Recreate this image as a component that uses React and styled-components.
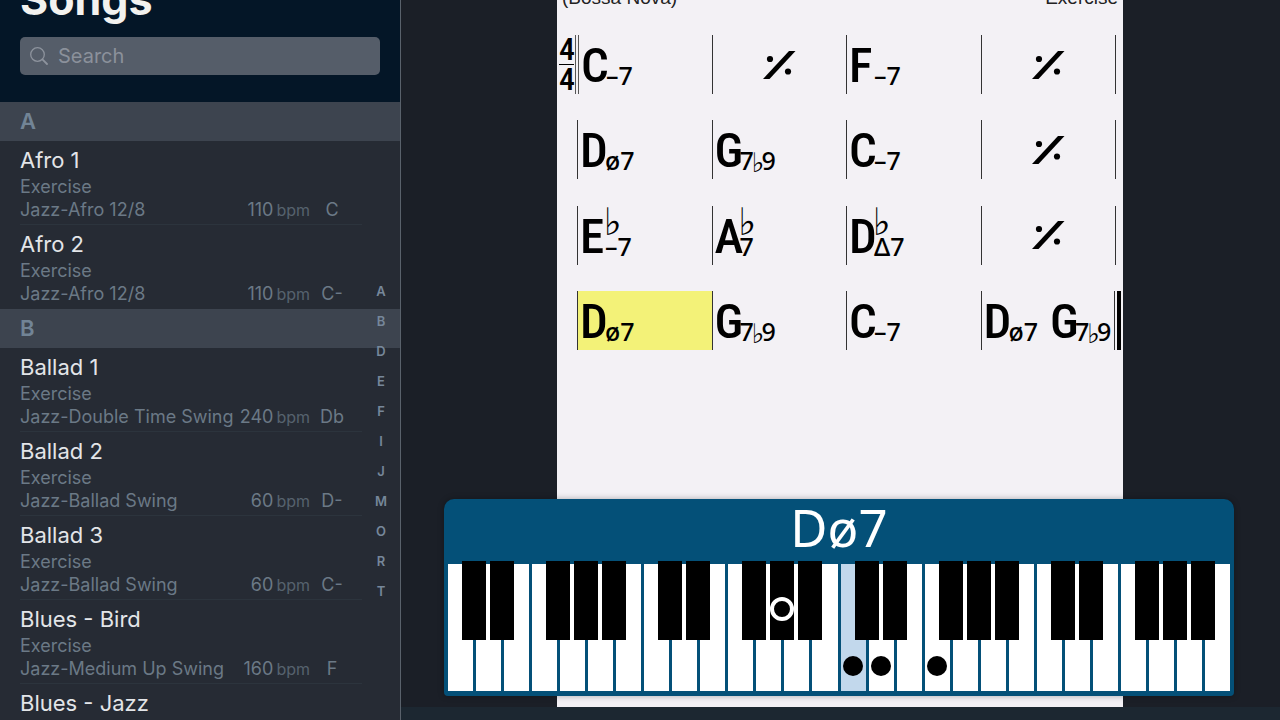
import React from 'react'
import styled, { createGlobalStyle } from 'styled-components'

const sections = [
  {
    letter: 'A',
    songs: [
      { title: 'Afro 1', style: 'Jazz-Afro 12/8', tempo: 110, songKey: 'C' },
      { title: 'Afro 2', style: 'Jazz-Afro 12/8', tempo: 110, songKey: 'C-' },
    ],
  },
  {
    letter: 'B',
    songs: [
      { title: 'Ballad 1', style: 'Jazz-Double Time Swing', tempo: 240, songKey: 'Db' },
      { title: 'Ballad 2', style: 'Jazz-Ballad Swing', tempo: 60, songKey: 'D-' },
      { title: 'Ballad 3', style: 'Jazz-Ballad Swing', tempo: 60, songKey: 'C-' },
      { title: 'Blues - Bird', style: 'Jazz-Medium Up Swing', tempo: 160, songKey: 'F' },
      { title: 'Blues - Jazz', style: 'Jazz-Medium Swing', tempo: 120, songKey: 'F' },
    ],
  },
]

const letters = ['A', 'B', 'D', 'E', 'F', 'I', 'J', 'M', 'O', 'R', 'T']

// a measure is a list of chords, 'repeat' stands for the one bar repeat sign
const staves = [
  [[{ root: 'C', quality: '–7' }], 'repeat', [{ root: 'F', quality: '–7' }], 'repeat'],
  [[{ root: 'D', quality: 'ø7' }], [{ root: 'G', quality: '7♭9' }], [{ root: 'C', quality: '–7' }], 'repeat'],
  [
    [{ root: 'E', flat: true, quality: '–7' }],
    [{ root: 'A', flat: true, quality: '7' }],
    [{ root: 'D', flat: true, quality: 'Δ7' }],
    'repeat',
  ],
  [
    [{ root: 'D', quality: 'ø7' }],
    [{ root: 'G', quality: '7♭9' }],
    [{ root: 'C', quality: '–7' }],
    [{ root: 'D', quality: 'ø7' }, { root: 'G', quality: '7♭9' }],
  ],
]

const noteNames = ['C', 'D', 'E', 'F', 'G', 'A', 'B']
const whiteKeys = Array.from({ length: 28 }, (_, i) => ({
  note: noteNames[i % 7],
  octave: Math.floor(i / 7) + 2,
  sharp: ![2, 6].includes(i % 7),
}))
const rootKey = 14
const playedKeys = [14, 15, 17]
const bassKey = 11

const Song = ({ title, style, tempo, songKey }) => (
  <SongItem>
    <SongButton type="button">
      <SongTitle>{title}</SongTitle>
      <div>Exercise</div>
      <Meta>
        <StyleName>{style}</StyleName>
        <Tempo>{tempo}</Tempo>
        <Bpm>bpm</Bpm>
        <SongKey>{songKey}</SongKey>
      </Meta>
    </SongButton>
  </SongItem>
)

const Chord = ({ root, flat, quality }) => (
  <ChordBox>
    <Root>{root}</Root>
    {flat && <Accidental>♭</Accidental>}
    <Quality>
      {quality.split('').map((char, i) => (char === '♭' ? <SmallFlat key={i}>♭</SmallFlat> : char))}
    </Quality>
  </ChordBox>
)

const RepeatSign = () => (
  <svg width="33" height="28" viewBox="0 0 33 28" role="img" aria-label="Repeat bar">
    <path d="M0 28 L26 0 H32.5 L6.5 28 Z" />
    <circle cx="7" cy="8" r="3.1" />
    <circle cx="25" cy="20.5" r="3.1" />
  </svg>
)

const Measure = ({ content, active, first }) => (
  <MeasureBox $active={active} $first={first} $center={content === 'repeat'}>
    {content === 'repeat' ? <RepeatSign /> : content.map((chord, i) => <Chord key={i} {...chord} />)}
  </MeasureBox>
)

const SongList = () => (
  <Sidebar>
    <Header>
      <Heading>Songs</Heading>
      <SearchBox>
        <svg width="18" height="18" viewBox="0 0 18 18" fill="none" stroke="#8d939d" aria-hidden="true">
          <circle cx="7.5" cy="7.5" r="6.8" strokeWidth="1.3" />
          <path d="M12.4 12.4 L17 17" strokeWidth="1.8" strokeLinecap="round" />
        </svg>
        <SearchInput type="search" placeholder="Search" aria-label="Search" />
      </SearchBox>
    </Header>
    {sections.map((section) => (
      <section key={section.letter} id={section.letter}>
        <SectionTitle>{section.letter}</SectionTitle>
        <List>
          {section.songs.map((song) => (
            <Song key={song.title} {...song} />
          ))}
        </List>
      </section>
    ))}
    <LetterIndex aria-label="Index">
      {letters.map((letter) => (
        <a key={letter} href={`#${letter}`}>
          {letter}
        </a>
      ))}
    </LetterIndex>
  </Sidebar>
)

const Keyboard = () => (
  <KeyboardPanel>
    <ChordName>Dø7</ChordName>
    <Keys>
      {whiteKeys.map(({ note, octave, sharp }, i) => (
        <KeySlot key={i}>
          <WhiteKey type="button" aria-label={`${note}${octave}`} $root={i === rootKey}>
            {playedKeys.includes(i) && <Dot />}
          </WhiteKey>
          {sharp && (
            <BlackKey type="button" aria-label={`${note} sharp ${octave}`}>
              {i === bassKey && <Ring />}
            </BlackKey>
          )}
        </KeySlot>
      ))}
    </Keys>
  </KeyboardPanel>
)

const App = () => (
  <Layout>
    <GlobalStyle />
    <SongList />
    <Main>
      <Stage>
        <Sheet>
          <SheetHeader>
            <span>(Bossa Nova)</span>
            <span>Exercise</span>
          </SheetHeader>
          <Staves>
            {staves.map((measures, row) => (
              <Stave key={row}>
                <Gutter>
                  {row === 0 && (
                    <TimeSignature>
                      <span>4</span>
                      <span>4</span>
                    </TimeSignature>
                  )}
                </Gutter>
                {measures.map((content, i) => (
                  <Measure key={i} content={content} active={row === 3 && i === 0} first={row === 0 && i === 0} />
                ))}
                <EndBar $final={row === 3} />
              </Stave>
            ))}
          </Staves>
        </Sheet>
        <Keyboard />
      </Stage>
      <BottomBar />
    </Main>
  </Layout>
)

//Styled components
const GlobalStyle = createGlobalStyle`
  * {
    box-sizing: border-box;
  }
  body {
    margin: 0;
    background: #1b1f27;
    font-family: Inter, "Liberation Sans", sans-serif;
  }
  button {
    border: none;
    padding: 0;
    font: inherit;
    color: inherit;
    background: none;
    cursor: pointer;
  }
`

const Layout = styled.div`
  display: flex;
  height: 100vh;
  overflow: hidden;
`

const Sidebar = styled.aside`
  position: relative;
  flex: 0 0 401px;
  overflow: hidden;
  background: #262b34;
  border-right: 1px solid #59616b;
`

const Header = styled.header`
  display: flex;
  flex-direction: column;
  justify-content: flex-end;
  height: 102px;
  padding: 0 20px 27px;
  background: #041627;
`

const Heading = styled.h1`
  margin: 0 0 12px;
  font-size: 43px;
  line-height: 52px;
  font-weight: 700;
  color: #f3f2ef;
`

const SearchBox = styled.label`
  display: flex;
  align-items: center;
  gap: 10px;
  flex: 0 0 38px;
  padding: 0 10px;
  border-radius: 5px;
  background: #555d69;
`

const SearchInput = styled.input`
  flex: 1;
  min-width: 0;
  padding: 0;
  border: none;
  outline: none;
  background: none;
  color: #e6e8ea;
  font: 20px Inter, sans-serif;

  &::placeholder {
    color: #8b919b;
    opacity: 1;
  }
`

const SectionTitle = styled.h2`
  margin: 0;
  padding-left: 20px;
  font-size: 22px;
  line-height: 39px;
  font-weight: 600;
  color: #728496;
  background: #3d444f;
`

const List = styled.ul`
  margin: 0;
  padding: 0 38px 0 20px;
  list-style: none;
`

const SongItem = styled.li`
  height: 84px;
  border-bottom: 1px solid #2c343d;

  &:last-child {
    border-bottom: none;
  }
`

const SongButton = styled.button`
  display: block;
  width: 100%;
  padding-top: 5px;
  text-align: left;
  font-size: 18px;
  line-height: 23px;
  color: #6b7986;
`

const SongTitle = styled.div`
  margin-bottom: 1px;
  font-size: 22px;
  line-height: 28px;
  color: #e3e5e8;
`

const Meta = styled.div`
  display: flex;
  align-items: baseline;
  padding-right: 8px;
  white-space: nowrap;
`

const StyleName = styled.span`
  flex: 1;
`

const Tempo = styled.span`
  margin-right: 3px;
`

const Bpm = styled.span`
  font-size: 16px;
  color: #56626e;
`

const SongKey = styled.span`
  width: 44px;
  text-align: center;
`

const LetterIndex = styled.nav`
  position: absolute;
  top: 276px;
  right: 10px;
  width: 18px;
  display: flex;
  flex-direction: column;
  text-align: center;
  font-size: 13px;
  line-height: 30px;
  font-weight: 600;

  a {
    color: #76879a;
    text-decoration: none;
  }
`

const Main = styled.main`
  flex: 1;
  min-width: 0;
  display: flex;
  flex-direction: column;
`

const Stage = styled.div`
  position: relative;
  flex: 1;
  display: flex;
  padding: 0 157px 0 156px;
`

const BottomBar = styled.footer`
  height: 13px;
  background: #1c2731;
`

const Sheet = styled.article`
  flex: 1;
  min-width: 0;
  background: #f3f1f5;
  color: #000;
`

const SheetHeader = styled.header`
  display: flex;
  justify-content: space-between;
  align-items: flex-end;
  height: 9px;
  padding: 0 5px;
  font: 19px/22px "Liberation Sans", sans-serif;
  color: #222;
`

const Staves = styled.div`
  display: flex;
  flex-direction: column;
  justify-content: space-between;
  height: 315px;
  margin-top: 26px;
  font-family: "Noto Sans", "Open Sans", sans-serif;
  font-weight: 500;
`

const Stave = styled.div`
  display: grid;
  grid-template-columns: 20px repeat(4, 1fr) 8px;
  grid-template-rows: 59px;
`

const Gutter = styled.div`
  padding: 0 2px;
`

const TimeSignature = styled.div`
  display: flex;
  flex-direction: column;
  width: 15px;
  text-align: center;
  font-family: "Roboto Condensed", "Liberation Sans Narrow", sans-serif;
  font-size: 32px;
  line-height: 29px;

  span + span {
    border-top: 1px solid #000;
  }
`

const MeasureBox = styled.div`
  display: flex;
  align-items: center;
  justify-content: ${({ $center }) => ($center ? 'center' : 'flex-start')};
  gap: 12px;
  min-width: 0;
  margin-left: ${({ $first }) => ($first ? '-2px' : '0')};
  padding-left: ${({ $center }) => ($center ? '0' : '2px')};
  border-left: ${({ $first }) => ($first ? '4px double #555' : '1px solid #333')};
  background: ${({ $active }) => ($active ? '#f3f278' : 'none')};
`

const ChordBox = styled.div`
  position: relative;
  display: flex;
  align-items: baseline;
  padding-top: 2px;
  line-height: 57px;
`

const Root = styled.span`
  width: 25px;
  font-family: "Roboto Condensed", "Liberation Sans Narrow", sans-serif;
  font-size: 49px;
`

const Accidental = styled.span`
  position: absolute;
  left: 24px;
  top: -3px;
  font-family: "DejaVu Sans", sans-serif;
  font-size: 38px;
  line-height: 38px;
`

const Quality = styled.sub`
  position: relative;
  top: 3px;
  font-size: 25px;
  line-height: 26px;
  vertical-align: baseline;
`

const SmallFlat = styled.span`
  margin: 0 -3px 0 -2px;
  font-family: "DejaVu Sans", sans-serif;
  font-size: 27px;
  vertical-align: -2px;
`

const EndBar = styled.div`
  width: ${({ $final }) => ($final ? '7px' : '1px')};
  margin-left: ${({ $final }) => ($final ? '-1px' : '0')};
  border-left: 1px solid #333;
  border-right: ${({ $final }) => ($final ? '4px solid #000' : 'none')};
`

const KeyboardPanel = styled.section`
  position: absolute;
  left: 43px;
  right: 46px;
  bottom: 11px;
  padding: 0 4px 5px;
  border-radius: 10px 10px 4px 4px;
  background: #045078;
  box-shadow: 0 0 6px rgba(0, 0, 0, 0.3);
`

const ChordName = styled.h2`
  margin: 0;
  padding-bottom: 9px;
  text-align: center;
  font: 400 51px/56px "Noto Sans", "Open Sans", sans-serif;
  color: #fff;
`

const Keys = styled.div`
  display: grid;
  grid-template-columns: repeat(28, 1fr);
  gap: 3px;
  height: 127px;
`

const KeySlot = styled.div`
  position: relative;
  display: flex;
`

const WhiteKey = styled.button`
  flex: 1;
  display: flex;
  justify-content: center;
  align-items: flex-end;
  padding-bottom: 15px;
  background: ${({ $root }) => ($root ? '#c2d8ec' : '#fff')};
`

const BlackKey = styled.button`
  position: absolute;
  z-index: 1;
  top: -3px;
  right: -13px;
  width: 24px;
  height: 79px;
  display: flex;
  align-items: flex-end;
  justify-content: center;
  padding-bottom: 19px;
  background: #000;
`

const Dot = styled.span`
  flex: none;
  width: 20px;
  height: 20px;
  border-radius: 50%;
  background: #000;
`

const Ring = styled.span`
  flex: none;
  width: 24px;
  height: 24px;
  border: 4px solid #fff;
  border-radius: 50%;
`

export default App
